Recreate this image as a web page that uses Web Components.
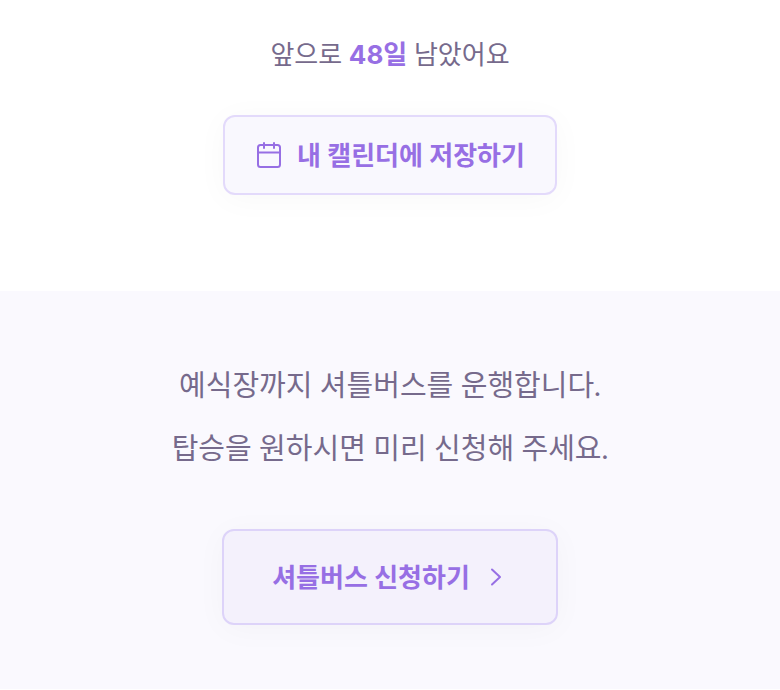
<!DOCTYPE html>
<html lang="ko"><head><meta charset="utf-8"><title>예식 안내</title>
<style>
body{margin:0;background:#fff;font-family:Lato,"Noto Sans CJK KR",sans-serif;color:#766a8c}
</style></head><body>
<wedding-page></wedding-page>
<script>
class DdayCount extends HTMLElement{constructor(){super();this.attachShadow({mode:'open'}).innerHTML=`
<style>:host{display:block;text-align:center}p{margin:0;font-size:26px;line-height:40px}::slotted(strong){color:#976fe4;font-family:Inter,"Noto Sans CJK KR",sans-serif;font-weight:700}</style>
<p><slot></slot></p>`}}
customElements.define('dday-count',DdayCount);
class SoftButton extends HTMLElement{constructor(){super();this.attachShadow({mode:'open'}).innerHTML=`
<style>
:host{display:flex;justify-content:center}
button{display:flex;align-items:center;justify-content:center;gap:14px;box-sizing:border-box;padding:18px 30px;border:2px solid #e3dafb;border-radius:12px;background:#f9f8fe;color:#976fe4;font:700 26px/40px Lato,"Noto Sans CJK KR",sans-serif;box-shadow:0 4px 32px rgba(0,0,0,.03);cursor:pointer}
:host([tone=deep]) button{padding:26px 48px;border-color:#ddd3f9;background:#f4f1fc}
</style>
<button type="button"><slot name="before"></slot><span><slot></slot></span><slot name="after"></slot></button>`}}
customElements.define('soft-button',SoftButton);
class WeddingPage extends HTMLElement{constructor(){super();this.attachShadow({mode:'open'}).innerHTML=`
<style>
:host{display:block}
.date{display:grid;gap:40px;padding:34px 24px 96px}
.bus{display:grid;gap:50px;padding:62px 24px 64px;background:#faf9fe}
p{margin:0;text-align:center;font-size:29px;line-height:63px}
svg{display:block;fill:none;stroke:currentColor;stroke-width:2;stroke-linecap:round;stroke-linejoin:round}
</style>
<section class="date"><dday-count>앞으로 <strong>48일</strong> 남았어요</dday-count>
<soft-button><svg slot="before" width="28" height="28" viewBox="0 0 28 28"><rect x="3" y="4" width="22" height="22" rx="2.5"/><path d="M3 11.500h22M9 2v5M19 2v5"/></svg>내 캘린더에 저장하기</soft-button></section>
<section class="bus"><p>예식장까지 셔틀버스를 운행합니다.<br>탑승을 원하시면 미리 신청해 주세요.</p>
<soft-button tone="deep">셔틀버스 신청하기<svg slot="after" width="24" height="24" viewBox="0 0 24 24"><path d="M8 4.500l8 7.500-8 7.500"/></svg></soft-button></section>`}}
customElements.define('wedding-page',WeddingPage);
</script></body></html>
